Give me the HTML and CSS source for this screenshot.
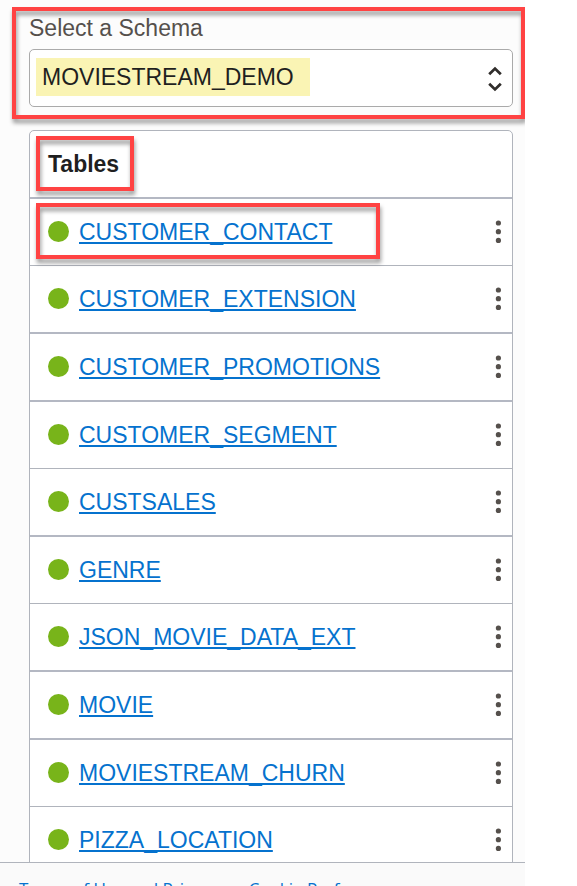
FILE: index.html
```html
<!DOCTYPE html>
<html lang="en">
<head>
<meta charset="utf-8">
<title>Schema Tables</title>
<link rel="stylesheet" href="styles.css">
</head>
<body>
<svg class="sprite" aria-hidden="true">
  <symbol id="dots" viewBox="0 0 6 24"><circle cx="3.4" cy="3" r="2.6"/><circle cx="3.4" cy="11.7" r="2.6"/><circle cx="3.4" cy="20.4" r="2.6"/></symbol>
</svg>
<div class="page">
  <main class="content">
    <div class="schema">
      <label class="schema-label" for="schema">Select a Schema</label>
      <div class="field">
        <span class="highlight"></span>
        <select class="schema-select" id="schema"><option>MOVIESTREAM_DEMO</option></select>
        <svg class="chevrons" viewBox="0 0 14 26" aria-hidden="true"><path d="M1.200 8.200 7 2.600l5.800 5.600M1.200 17.800 7 23.400l5.800-5.600"/></svg>
      </div>
      <span class="callout callout-schema"></span>
    </div>
    <table class="tables">
      <thead>
        <tr><th scope="col" colspan="2"><span class="title">Tables</span><span class="callout callout-title"></span></th></tr>
      </thead>
      <tbody>
        <tr class="thin"><td><span class="dot"></span><a href="#">CUSTOMER_CONTACT</a><span class="callout callout-row"></span></td><td class="actions"><button type="button" aria-label="Actions"><svg><use href="#dots"/></svg></button></td></tr>
        <tr><td><span class="dot"></span><a href="#">CUSTOMER_EXTENSION</a></td><td class="actions"><button type="button" aria-label="Actions"><svg><use href="#dots"/></svg></button></td></tr>
        <tr><td><span class="dot"></span><a href="#">CUSTOMER_PROMOTIONS</a></td><td class="actions"><button type="button" aria-label="Actions"><svg><use href="#dots"/></svg></button></td></tr>
        <tr class="thin"><td><span class="dot"></span><a href="#">CUSTOMER_SEGMENT</a></td><td class="actions"><button type="button" aria-label="Actions"><svg><use href="#dots"/></svg></button></td></tr>
        <tr><td><span class="dot"></span><a href="#">CUSTSALES</a></td><td class="actions"><button type="button" aria-label="Actions"><svg><use href="#dots"/></svg></button></td></tr>
        <tr class="thin"><td><span class="dot"></span><a href="#">GENRE</a></td><td class="actions"><button type="button" aria-label="Actions"><svg><use href="#dots"/></svg></button></td></tr>
        <tr><td><span class="dot"></span><a href="#">JSON_MOVIE_DATA_EXT</a></td><td class="actions"><button type="button" aria-label="Actions"><svg><use href="#dots"/></svg></button></td></tr>
        <tr><td><span class="dot"></span><a href="#">MOVIE</a></td><td class="actions"><button type="button" aria-label="Actions"><svg><use href="#dots"/></svg></button></td></tr>
        <tr class="thin"><td><span class="dot"></span><a href="#">MOVIESTREAM_CHURN</a></td><td class="actions"><button type="button" aria-label="Actions"><svg><use href="#dots"/></svg></button></td></tr>
        <tr><td><span class="dot"></span><a href="#">PIZZA_LOCATION</a></td><td class="actions"><button type="button" aria-label="Actions"><svg><use href="#dots"/></svg></button></td></tr>
      </tbody>
    </table>
  </main>
  <footer class="footer">
    <a href="#">Terms of Use and Privacy</a>
    <a href="#">Cookie Preferences</a>
  </footer>
</div>
</body>
</html>
```
FILE: styles.css
```css
* {
  box-sizing: border-box;
}

body {
  margin: 0;
  background: #fff;
  color: #1f1f1f;
  font-family: "Liberation Sans", Arial, sans-serif;
  font-size: 23px;
  line-height: 26px;
}

.sprite {
  position: absolute;
  width: 0;
  height: 0;
}

.page {
  display: flex;
  flex-direction: column;
  height: 100vh;
  margin-right: 52px;
  background: #fcfcfc;
}

.content {
  flex: 1;
  min-height: 0;
  overflow: hidden;
  padding: 15px 12px 0 29px;
}

.schema {
  position: relative;
  margin-bottom: 23px;
}

.schema-label {
  display: block;
  margin-bottom: 8px;
  color: #55504c;
}

.field {
  position: relative;
  height: 58px;
  border: 1px solid #aaa;
  border-radius: 5px;
  background: #fff;
}

.highlight {
  position: absolute;
  top: 8px;
  left: 6px;
  width: 274px;
  height: 38px;
  background: #faf4b4;
}

.schema-select {
  position: relative;
  display: block;
  width: 100%;
  height: 100%;
  padding: 0 48px 2px 12px;
  border: 0;
  background: transparent;
  color: inherit;
  font: inherit;
  appearance: none;
}

.chevrons {
  position: absolute;
  top: 16px;
  right: 10px;
  width: 14px;
  height: 26px;
  fill: none;
  stroke: #302d2b;
  stroke-width: 2.8;
  pointer-events: none;
}

.callout {
  position: absolute;
  border: 4px solid #ff4343;
  filter: drop-shadow(1px 4px 2px rgba(0, 0, 0, 0.4));
  pointer-events: none;
}

.callout-schema {
  inset: -8px -12px -12px -17px;
}

.tables {
  width: 100%;
  border: 1px solid #b0b4bc;
  border-radius: 5px 5px 0 0;
  border-spacing: 0;
  background: #fff;
}

.tables th,
.tables td {
  position: relative;
  height: 68px;
  padding: 0 0 0 18px;
  border-bottom: 2px solid #b4b8c3;
  text-align: left;
  vertical-align: middle;
}

.tables td {
  padding-bottom: 2px;
}

.tables .thin td {
  height: 67px;
  border-bottom: 1px solid #b0b4bc;
}

.callout-title {
  top: 5px;
  left: 6px;
  width: 98px;
  height: 55px;
}

.callout-row {
  top: 4px;
  left: 6px;
  width: 344px;
  height: 56px;
}

.dot {
  display: inline-block;
  width: 21px;
  height: 21px;
  margin-right: 10px;
  border-radius: 50%;
  background: #78b41a;
  vertical-align: middle;
}

.tables a {
  color: #0572ce;
  text-decoration: underline 2px;
  text-decoration-skip-ink: none;
  text-underline-offset: 2px;
  vertical-align: middle;
}

.tables .actions {
  width: 30px;
  padding: 0 11px 2px 0;
  text-align: right;
}

.actions button {
  display: inline-flex;
  padding: 0;
  border: 0;
  background: none;
  vertical-align: middle;
}

.actions svg {
  width: 6px;
  height: 24px;
  fill: #55504c;
}

.footer {
  display: flex;
  gap: 30px;
  height: 24px;
  padding: 14px 19px 0;
  overflow: hidden;
  border-top: 1px solid #b0b4bc;
  background: #fafafa;
  font-family: "Open Sans", sans-serif;
  font-size: 17px;
  line-height: 24px;
  white-space: nowrap;
}

.footer a {
  color: #0572ce;
  text-decoration: none;
}
```
